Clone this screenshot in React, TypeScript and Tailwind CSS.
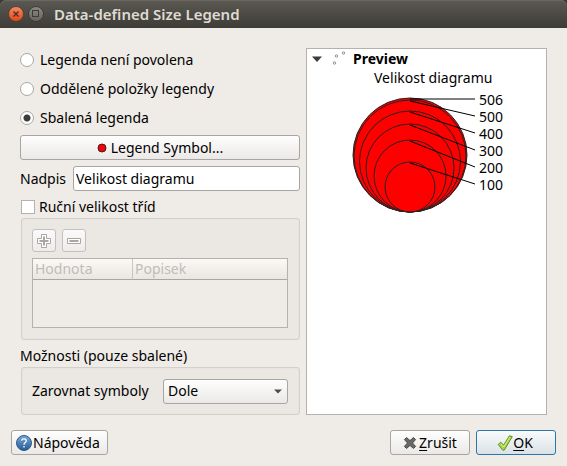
import { useState } from "react";
import type { ReactNode } from "react";

const raised =
  "rounded-[3px] border border-[#a8a5a2] bg-linear-to-b from-[#fefefe] to-[#ebe9e7]";
const group =
  "ml-px rounded-[3px] border border-[#d3cfcb] bg-[#ebe7e3] py-[10px] pr-[11px] pl-[10px] shadow-[inset_0_0_1px_#cfcbc7]";

const modes = ["Legenda není povolena", "Oddělené položky legendy", "Sbalená legenda"];

const classes = [
  { label: "506", top: 8 },
  { label: "500", top: 10 },
  { label: "400", top: 21 },
  { label: "300", top: 34 },
  { label: "200", top: 50 },
  { label: "100", top: 72 },
];

function TitleBar() {
  return (
    <header className="flex h-7 items-center gap-1 rounded-t-md bg-linear-to-b from-[#5b5952] to-[#3d3c37] pl-2 shadow-[inset_0_1px_0_#6a6860]">
      <button type="button" aria-label="Close" className="size-4 rounded-full">
        <svg viewBox="0 0 16 16" className="size-4">
          <defs>
            <linearGradient id="closeFill" x1="0" y1="0" x2="0" y2="1">
              <stop offset="0" stopColor="#f58a66" />
              <stop offset="1" stopColor="#dd4814" />
            </linearGradient>
          </defs>
          <circle cx="8" cy="8" r="7.5" fill="url(#closeFill)" stroke="#4a3a30" strokeWidth="0.8" />
          <path d="M5.500 5.500l5 5M10.500 5.500l-5 5" stroke="#4a2c1f" strokeWidth="1.3" />
        </svg>
      </button>
      <button type="button" aria-label="Maximize" className="size-4 rounded-full">
        <svg viewBox="0 0 16 16" className="size-4">
          <defs>
            <linearGradient id="maxFill" x1="0" y1="0" x2="0" y2="1">
              <stop offset="0" stopColor="#8b8981" />
              <stop offset="1" stopColor="#65635c" />
            </linearGradient>
          </defs>
          <circle cx="8" cy="8" r="7.5" fill="url(#maxFill)" stroke="#34332e" strokeWidth="0.8" />
          <rect x="4.5" y="4.5" width="6" height="6" fill="none" stroke="#3c3b37" />
        </svg>
      </button>
      <h1 className="pl-1.5 text-[15px] leading-5 font-semibold text-[#dfdbd2]">
        Data-defined Size Legend
      </h1>
    </header>
  );
}

function ToolButton({ label, children }: { label: string; children: ReactNode }) {
  return (
    <button
      type="button"
      disabled
      aria-label={label}
      className="flex h-[23px] w-6 items-center justify-center rounded-[3px] border border-[#c4c0bd] bg-linear-to-b from-[#fbfafa] to-[#eeecea]"
    >
      {children}
    </button>
  );
}

function SizeLegend() {
  return (
    <div className="flex pl-[43px]">
      <svg viewBox="0 0 126 124" className="block h-[124px] w-[126px]" role="img" aria-label="Velikost diagramu">
        {classes.map(({ label, top }) => {
          const radius = (122 - top) / 2;
          return (
            <circle
              key={label}
              cx="60"
              cy={122 - radius}
              r={radius}
              fill="#ff0000"
              stroke="#232323"
            />
          );
        })}
        {classes.map(({ label, top }, i) => (
          <line
            key={label}
            x1="60"
            y1={top + 1}
            x2="125"
            y2={9 + i * 17}
            stroke="#000000"
          />
        ))}
      </svg>
      <ul className="pt-px pl-[3px] leading-[17px]">
        {classes.map(({ label }) => (
          <li key={label}>{label}</li>
        ))}
      </ul>
    </div>
  );
}

function Preview() {
  return (
    <section className="min-w-0 flex-1 border border-[#b4b1ae] bg-white">
      <div className="flex h-[19px] items-center pl-1">
        <svg viewBox="0 0 12 8" className="h-2 w-3">
          <path d="M1 1.5h10L6 7z" fill="#3c3c3c" />
        </svg>
        <svg viewBox="0 0 16 16" className="ml-2 size-4" fill="none" stroke="#858585" strokeWidth="0.9">
          <circle cx="3.5" cy="12" r="1.2" />
          <circle cx="5.500" cy="5" r="1.2" />
          <circle cx="12.500" cy="2" r="1.2" />
        </svg>
        <h2 className="pl-1.5 text-[14px] leading-5 font-bold">Preview</h2>
      </div>
      <p className="mb-0.5 pl-[67px] leading-5">Velikost diagramu</p>
      <SizeLegend />
    </section>
  );
}

export default function App() {
  const [mode, setMode] = useState(2);
  const [title, setTitle] = useState("Velikost diagramu");
  const [manual, setManual] = useState(false);

  return (
    <div className="min-h-screen bg-[#3a3934] font-['Noto_Sans','Open_Sans',sans-serif] text-[14px] leading-5 text-black">
      <TitleBar />
      <main className="min-h-[calc(100vh-28px)] bg-[#efebe7] px-[11px] pt-5 pb-[11px]">
        <div className="flex gap-1.5 px-[9px]">
          <div className="w-[280px] shrink-0">
            <div className="flex flex-col gap-1.5">
              {modes.map((label, i) => (
                <label key={label} className="flex h-[23px] items-center gap-1.5">
                  <input
                    type="radio"
                    name="mode"
                    checked={mode === i}
                    onChange={() => setMode(i)}
                    className="size-3.5 appearance-none rounded-full border border-[#a8a5a2] bg-white checked:bg-[radial-gradient(circle,#3c3c3c_3px,#ffffff_4px)]"
                  />
                  {label}
                </label>
              ))}
              <button type="button" className={`flex h-[25px] items-center justify-center gap-1 ${raised}`}>
                <svg viewBox="0 0 10 10" className="size-2.5">
                  <circle cx="5" cy="5" r="4" fill="#ff0000" stroke="#3a2323" />
                </svg>
                Legend Symbol...
              </button>
              <div className="flex h-[25px] items-center gap-1.5">
                <label htmlFor="title" className="w-[47px]">
                  Nadpis
                </label>
                <input
                  id="title"
                  type="text"
                  value={title}
                  onChange={(e) => setTitle(e.target.value)}
                  className="h-[25px] min-w-0 flex-1 rounded-[3px] border border-[#a8a5a2] bg-white px-0.5"
                />
              </div>
            </div>
            <label className="mt-1 flex h-[23px] items-center gap-1">
              <input
                type="checkbox"
                checked={manual}
                onChange={(e) => setManual(e.target.checked)}
                className="ml-px size-3.5 appearance-none border border-[#b4b1ae] bg-white checked:bg-[#3c3c3c]"
              />
              Ruční velikost tříd
            </label>
            <div className={`h-[122px] ${group}`}>
              <div className="flex gap-1.5">
                <ToolButton label="Add">
                  <svg viewBox="0 0 14 14" className="size-3.5" fill="#ffffff" stroke="#a9a6a3">
                    <path d="M4.500 .5h5v4h4v5h-4v4h-5v-4h-4v-5h4z" />
                    <path d="M7 2.500v9M2.500 7h9" strokeWidth="2" />
                  </svg>
                </ToolButton>
                <ToolButton label="Remove">
                  <svg viewBox="0 0 14 14" className="size-3.5" fill="#ffffff" stroke="#a9a6a3">
                    <path d="M.5 4.500h13v5h-13z" />
                    <path d="M2.500 7h9" strokeWidth="2" />
                  </svg>
                </ToolButton>
              </div>
              <div className="mt-1.5 h-[70px] border border-[#b4b1ae] bg-[#efebe7]">
                <table className="w-full table-fixed border-separate border-spacing-0 text-left text-[#bfbcb9]">
                  <thead>
                    <tr className="h-[21px] bg-linear-to-b from-[#fbf8f5] to-[#e9e6e2]">
                      <th className="w-[100px] border-r border-b border-r-[#c8c5c2] border-b-[#a8a5a2] px-0.5 font-normal">
                        Hodnota
                      </th>
                      <th className="border-b border-[#a8a5a2] px-0.5 font-normal">Popisek</th>
                    </tr>
                  </thead>
                </table>
              </div>
            </div>
            <h2 className="mt-1.5 mb-px">Možnosti (pouze sbalené)</h2>
            <div className={`flex h-12 items-center gap-2.5 ${group}`}>
              <label htmlFor="align" className="w-[121px]">
                Zarovnat symboly
              </label>
              <div className="relative min-w-0 flex-1">
                <select id="align" className={`block h-[25px] w-full appearance-none px-1 ${raised}`}>
                  <option>Dole</option>
                  <option>Uprostřed</option>
                  <option>Nahoře</option>
                </select>
                <svg viewBox="0 0 8 5" className="pointer-events-none absolute top-2.5 right-1.5 h-[5px] w-2">
                  <path d="M0 .5h8L4 4.500z" fill="#4c4c4c" />
                </svg>
              </div>
            </div>
          </div>
          <Preview />
        </div>
        <footer className="mt-[15px] flex gap-1.5">
          <button type="button" className={`mr-auto flex h-[25px] w-[97px] items-center pl-1 ${raised}`}>
            <svg viewBox="0 0 16 16" className="size-4 shrink-0">
              <defs>
                <linearGradient id="helpFill" x1="0" y1="0" x2="0" y2="1">
                  <stop offset="0" stopColor="#7ba6d6" />
                  <stop offset="1" stopColor="#245b98" />
                </linearGradient>
              </defs>
              <circle cx="8" cy="8" r="7.5" fill="url(#helpFill)" stroke="#2b5c8c" />
              <path
                d="M5.600 5.600C5.800 3.200 10.400 3.200 10.300 5.900C10.200 7.600 8 7.600 8 9.700M8 11v1.600"
                fill="none"
                stroke="#ffffff"
                strokeWidth="1.3"
              />
            </svg>
            <span className="pl-px">Nápověda</span>
          </button>
          <button type="button" className={`flex h-[25px] w-20 items-center justify-center gap-0.5 ${raised}`}>
            <svg viewBox="0 0 14 14" className="size-3.5">
              <path
                d="M3.500 1.500L7 4.600L10.500 1.500L12.600 3.600L9.500 7L12.600 10.400L10.500 12.500L7 9.400L3.500 12.500L1.400 10.400L4.500 7L1.400 3.600z"
                fill="#666a66"
                stroke="#484c48"
                strokeLinejoin="round"
              />
            </svg>
            <span>
              <u className="underline-offset-2">Z</u>rušit
            </span>
          </button>
          <button
            type="button"
            className="flex h-[25px] w-20 items-center justify-center rounded-[3px] border border-[#2a76a6] bg-linear-to-b from-[#f8fafb] to-[#dbe2e7] pr-0.5"
          >
            <svg viewBox="0 0 16 16" className="size-4">
              <path
                d="M1.200 9.500L3.800 7.200L6.600 10.200L12.400 .8L15.300 1.600L7.200 15.200L5.800 15.200z"
                fill="#a8d84a"
                stroke="#5f8f23"
                strokeLinejoin="round"
              />
              <path d="M3.700 8.800L6.600 12L13 2" fill="none" stroke="#d4ef8e" />
            </svg>
            <span>
              <u className="underline-offset-2">O</u>K
            </span>
          </button>
        </footer>
      </main>
    </div>
  );
}
